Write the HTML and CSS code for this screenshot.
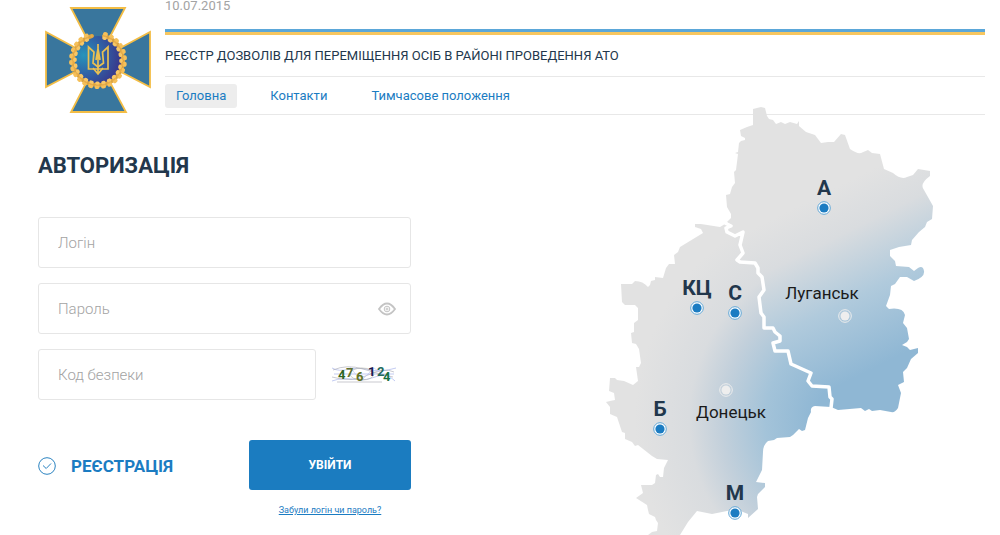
FILE: index.html
```html
<!DOCTYPE html>
<html lang="uk">
<head>
<meta charset="utf-8">
<meta name="viewport" content="width=device-width, initial-scale=1">
<title>Авторизація</title>
<link rel="stylesheet" href="styles.css">
</head>
<body>
<header class="header">
  <svg class="emblem" viewBox="0 0 106 106" aria-hidden="true">
    <defs>
      <radialGradient id="disc" cx="0.2" cy="0.4" r="0.85">
        <stop offset="0" stop-color="#2794bb"/>
        <stop offset="0.5" stop-color="#315fa4"/>
        <stop offset="1" stop-color="#3a2f86"/>
      </radialGradient>
    </defs>
    <g fill="#39769d" stroke="#f3bd45" stroke-width="1.8">
      <path d="M26 1H80L53 53Z"/>
      <path d="M105 25V80L53 53Z"/>
      <path d="M81 105H26L53 53Z"/>
      <path d="M1 80V25L53 53Z"/>
    </g>
    <circle cx="53" cy="53" r="24" fill="url(#disc)"/>
    <g fill="none" stroke-linecap="round">
      <path d="M59 29A25 25 0 1 1 47 29" stroke="#dba443" stroke-width="4"/>
      <path d="M60 27A27 27 0 1 1 46 27" stroke="#f5c05a" stroke-width="4" stroke-dasharray="1 5.500"/>
      <path d="M59 31A23 23 0 1 1 47 31" stroke="#f7c767" stroke-width="3.500" stroke-dasharray="1 5"/>
      <path d="M59 29A25 25 0 1 1 47 29" stroke="#e9ad4a" stroke-width="1.500" stroke-dasharray="2 4"/>
    </g>
    <g fill="none" stroke="#e9c052" stroke-width="1.7">
      <path d="M43.500 40V62H63V40L57.500 45 58.500 56 53 60 48 56 49 45Z"/>
      <path d="M53 37V67M48 61 53 67 58 61M53 42 51 53M53 42 55 53"/>
    </g>
  </svg>
  <div class="header-body">
    <time class="date" datetime="2015-07-10">10.07.2015</time>
    <p class="site-title">РЕЄСТР ДОЗВОЛІВ ДЛЯ ПЕРЕМІЩЕННЯ ОСІБ В РАЙОНІ ПРОВЕДЕННЯ АТО</p>
    <nav class="nav">
      <a class="nav-link nav-link-active" href="#">Головна</a>
      <a class="nav-link" href="#">Контакти</a>
      <a class="nav-link" href="#">Тимчасове положення</a>
    </nav>
  </div>
</header>
<main class="main">
  <form class="login">
    <h1 class="heading">АВТОРИЗАЦІЯ</h1>
    <div class="fields">
      <input class="input" type="text" placeholder="Логін" aria-label="Логін">
      <div class="password">
        <input class="input" type="password" placeholder="Пароль" aria-label="Пароль">
        <button class="reveal" type="button" aria-label="Показати пароль">
          <svg class="eye" viewBox="0 0 18 14" fill="none" stroke="#c4c4c4" aria-hidden="true">
            <path d="M1 7C4 2.800 6.300 1.500 9 1.500S14 2.800 17 7C14 11.200 11.700 12.500 9 12.500S4 11.200 1 7Z" stroke-width="1.800"/>
            <circle cx="9" cy="7" r="2.800"/>
            <circle cx="9" cy="7" r="1"/>
          </svg>
        </button>
      </div>
      <div class="code-row">
        <input class="input" type="text" placeholder="Код безпеки" aria-label="Код безпеки">
        <svg class="captcha" viewBox="0 0 64 20" role="img" aria-label="Код">
          <g fill="none" stroke-width="0.600">
            <path d="M0 3C10 9 20 1 34 4S52 6 64 3M2 9H62M0 16C16 10 26 18 40 13S56 10 63 16" stroke="#9aa7e8"/>
            <path d="M1 5Q15 -1 31 4T61 12M0 12Q20 18 36 10T62 7M5 17H50" stroke="#a5a5b0"/>
            <ellipse cx="30" cy="9" rx="12" ry="6" stroke="#b5b5a5"/>
            <path d="M18 2 29 16 42 3 58 15" stroke="#b9c2f2"/>
          </g>
          <g class="captcha-digits">
            <text x="6" y="14" fill="#2c6424">4</text>
            <text x="14" y="12" fill="#60702c">7</text>
            <text x="24" y="16" fill="#627322">6</text>
            <text x="36" y="11" fill="#16184f">1</text>
            <text x="45" y="11" fill="#236a5d">2</text>
            <text x="51" y="16" fill="#16713f">4</text>
          </g>
        </svg>
      </div>
    </div>
    <div class="actions">
      <a class="register" href="#">
        <svg class="check" viewBox="0 0 18 18" fill="none" stroke="#2b83c1" aria-hidden="true">
          <circle cx="9" cy="9" r="8.300"/>
          <path d="M5 8.500 8.200 11.500 13 6.500"/>
        </svg>
        РЕЄСТРАЦІЯ
      </a>
      <div class="submit-col">
        <button class="submit" type="submit">УВІЙТИ</button>
        <a class="forgot" href="#">Забули логін чи пароль?</a>
      </div>
    </div>
  </form>
  <svg class="map" viewBox="600 100 340 435" role="img" aria-label="Карта">
    <defs>
      <radialGradient id="west" gradientUnits="userSpaceOnUse" cx="860" cy="420" r="225">
        <stop offset="0.200" stop-color="#8fb7d4"/>
        <stop offset="0.420" stop-color="#a3c3d9"/>
        <stop offset="0.620" stop-color="#c3d0db"/>
        <stop offset="0.760" stop-color="#d9dcdf"/>
        <stop offset="1" stop-color="#e2e2e2"/>
      </radialGradient>
      <linearGradient id="east" gradientUnits="userSpaceOnUse" x1="800" y1="205" x2="880" y2="365">
        <stop offset="0" stop-color="#e2e2e2"/>
        <stop offset="0.250" stop-color="#d9dcdf"/>
        <stop offset="0.600" stop-color="#b0cadc"/>
        <stop offset="1" stop-color="#8fb7d4"/>
      </linearGradient>
    </defs>
    <path fill="url(#east)" d="M753 109 761 107 765 108 767 116 769 119 773 120 776 124 781 122 785 124 790 122 797 124 799 121 799 126 806 132 815 135 821 143 828 142 834 142 841 134 845 135 850 149 Q857 154 861 153L868 150 872 153 880 154 884 169 893 173Q901 180 907 177L913 175 918 169 930 171 930 176 Q919 184 924 190L933 206 932 219 927 222 925 227 919 232 912 240 911 245 899 247 890 250 890 256 895 261 896 266 909 267 914 271 918 268Q923 265 924 271 T914 281L907 277 900 277 895 284 891 286 890 295 886 306 889 309 Q903 307 905 315L903 323 907 328 909 339 907 342 902 345 907 347 910 350 918 348 918 353 911 359 907 368 903 372 904 382 898 385 901 393 898 408 Q895 413 891 412L880 410 872 411 869 409 865 411 861 408 838 410 831 407 830 397 829 387 812 386 808 381 812 373 791 364 788 351 775 351 773 343 780 340 773 328 764 328 764 317 761 313 759 300 764 290 763 282 758 273 755 263 737 260 743 253 740 245 743 232 733 236 726 231 731 226 727 222 731 218 731 214 727 207 726 195 730 194 732 187 735 183 734 172 736 170 738 154 735 153 738 152 739 143 741 141 745 140 745 138 741 136 740 130 747 127 753 125Z"/>
    <path fill="url(#west)" d="M831 407 815 406Q810 407 811 412L808 418 805 430 802 431 799 429 793 435 790 437 777 438 774 440 768 441 Q763 445 763 452L762 470 756 482 765 483 765 487 758 494 757 497 758 509 748 518 748 514 743 512 737 509 727 511 722 512 712 514 697 511 688 522 680 535H648L652 532 657 531 658 523 656 520 655 517 649 514 648 510 647 505 636 498 643 493 641 485 652 485 655 483 656 475 658 474 660 477 663 477 664 468 668 460 657 459 652 456 638 445 635 446 632 442 625 439 625 433 622 432 617 417 610 414 610 407 606 402 610 401 615 400 614 393 609 391 610 378 615 378 617 380 624 381 633 385 638 381 636 367 639 367 641 363 639 349 636 344 632 343 631 333 634 332 634 323 638 320 638 308 635 305 625 305 622 302 621 284 625 284 632 284 635 281 Q643 281 648 287L650 285 651 281 655 280 655 277 663 278 666 268 669 264 675 264 674 255 678 252 680 247 703 233 701 229 695 227 695 224 701 224 720 227 725 224 731 226 726 231 733 236 743 232 740 245 743 253 737 260 755 263 758 273 763 282 764 290 759 300 761 313 764 317 764 328 773 328 780 340 773 343 775 351 788 351 791 364 812 373 808 381 812 386 829 387 830 397Z"/>
    <path fill="none" stroke="#fff" stroke-width="3.500" stroke-linejoin="round" d="M725 223 731 226 726 228 727 232 735 236 743 232 740 245 743 253 737 260 740 262 755 263 758 268 758 273 762 277 764 290 759 297 761 313 764 317 764 328 773 328 775 332 780 336V341L773 343 775 351 788 351 791 364 811 373 808 381 812 386 829 387 830 397 832 399 831 408"/>
    <g fill="#fff" stroke="#5fa6d6"><circle cx="824" cy="208" r="6.300"/><circle cx="697" cy="308" r="6.300"/><circle cx="735" cy="313" r="6.300"/><circle cx="660" cy="429" r="6.300"/><circle cx="735" cy="513" r="6.300"/></g>
    <g fill="#1b7cc2"><circle cx="824" cy="208" r="4.600"/><circle cx="697" cy="308" r="4.600"/><circle cx="735" cy="313" r="4.600"/><circle cx="660" cy="429" r="4.600"/><circle cx="735" cy="513" r="4.600"/></g>
    <g fill="none" stroke="#eee"><circle cx="845" cy="316" r="6.300"/><circle cx="726" cy="390" r="6.300"/></g>
    <g fill="#eee"><circle cx="845" cy="316" r="4.500"/><circle cx="726" cy="390" r="4.500"/></g>
    <g class="map-mark">
      <text x="824" y="195">А</text>
      <text x="697" y="295">КЦ</text>
      <text x="735" y="300">С</text>
      <text x="660" y="416">Б</text>
      <text x="735" y="500">М</text>
    </g>
    <g class="map-city">
      <text x="822" y="299">Луганськ</text>
      <text x="731" y="418">Донецьк</text>
    </g>
  </svg>
</main>
</body>
</html>
```
FILE: styles.css
```css
* {
  box-sizing: border-box;
}

body {
  margin: 0;
  background: #fff;
  color: #22374c;
  font-family: Roboto, "Noto Sans", sans-serif;
  overflow-x: hidden;
}

a {
  color: #1b7cc2;
}

.header {
  display: flex;
  align-items: flex-start;
  gap: 14px;
  padding: 0 15px 0 45px;
}

.emblem {
  flex: none;
  width: 106px;
  height: 106px;
  margin-top: 7px;
}

.header-body {
  flex: 1;
}

.date {
  display: block;
  height: 29px;
  font-size: 13px;
  line-height: 11px;
  color: #a3a3a3;
}

.site-title {
  margin: 0;
  border-top: 3px solid #5ba7d9;
  font-size: 13px;
  line-height: 41px;
}

.site-title::before {
  content: "";
  display: block;
  height: 3px;
  background: #f7c65f;
}

.nav {
  display: flex;
  flex-wrap: wrap;
  gap: 22px;
  padding: 7px 0 6px;
  border: solid #e8e8e8;
  border-width: 1px 0;
}

.nav-link {
  padding: 0 11px;
  border-radius: 3px;
  font-size: 13px;
  line-height: 24px;
  text-decoration: none;
}

.nav-link-active {
  background: #ededed;
}

.main {
  display: flex;
  flex-wrap: wrap;
  justify-content: space-between;
  padding: 0 60px 0 38px;
}

.login {
  flex: 0 1 373px;
  padding-top: 36px;
}

.heading {
  margin: 0 0 36px;
  font-size: 22px;
  line-height: 30px;
}

.fields {
  display: grid;
  gap: 15px;
}

.input {
  width: 100%;
  height: 51px;
  padding: 0 19px;
  border: 1px solid #e6e6e6;
  border-radius: 3px;
  background: #fff;
  color: #22374c;
  font: 300 15px Roboto, "Noto Sans", sans-serif;
}

.input::placeholder {
  color: #a3a3a3;
}

.password {
  position: relative;
}

.reveal {
  position: absolute;
  top: 0;
  right: 15px;
  display: grid;
  place-items: center;
  height: 51px;
  padding: 0;
  border: 0;
  background: none;
}

.eye {
  width: 18px;
  height: 14px;
}

.code-row {
  display: grid;
  grid-template-columns: 1fr 64px;
  align-items: center;
  gap: 16px;
  padding-right: 15px;
}

.captcha {
  width: 64px;
  height: 20px;
}

.captcha-digits {
  font: 700 13px Roboto, sans-serif;
}

.actions {
  display: flex;
  justify-content: space-between;
  margin-top: 40px;
}

.register {
  display: flex;
  align-items: center;
  gap: 15px;
  height: 52px;
  font-size: 17px;
  font-weight: 700;
  text-decoration: none;
}

.check {
  width: 18px;
  height: 18px;
}

.submit-col {
  display: flex;
  flex-direction: column;
  align-items: center;
  width: 162px;
}

.submit {
  width: 100%;
  height: 50px;
  border: 0;
  border-radius: 3px;
  background: #1b7cc0;
  color: #fff;
  font: 700 12px Roboto, sans-serif;
}

.forgot {
  margin-top: 12px;
  font-size: 9px;
  line-height: 16px;
}

.map {
  position: relative;
  width: 340px;
  height: 435px;
  margin-top: -15px;
}

.map-mark {
  fill: #22374c;
  font: 700 21px Roboto, sans-serif;
  text-anchor: middle;
}

.map-city {
  fill: #1a1a1a;
  font: 400 17px Roboto, sans-serif;
  text-anchor: middle;
}
```
